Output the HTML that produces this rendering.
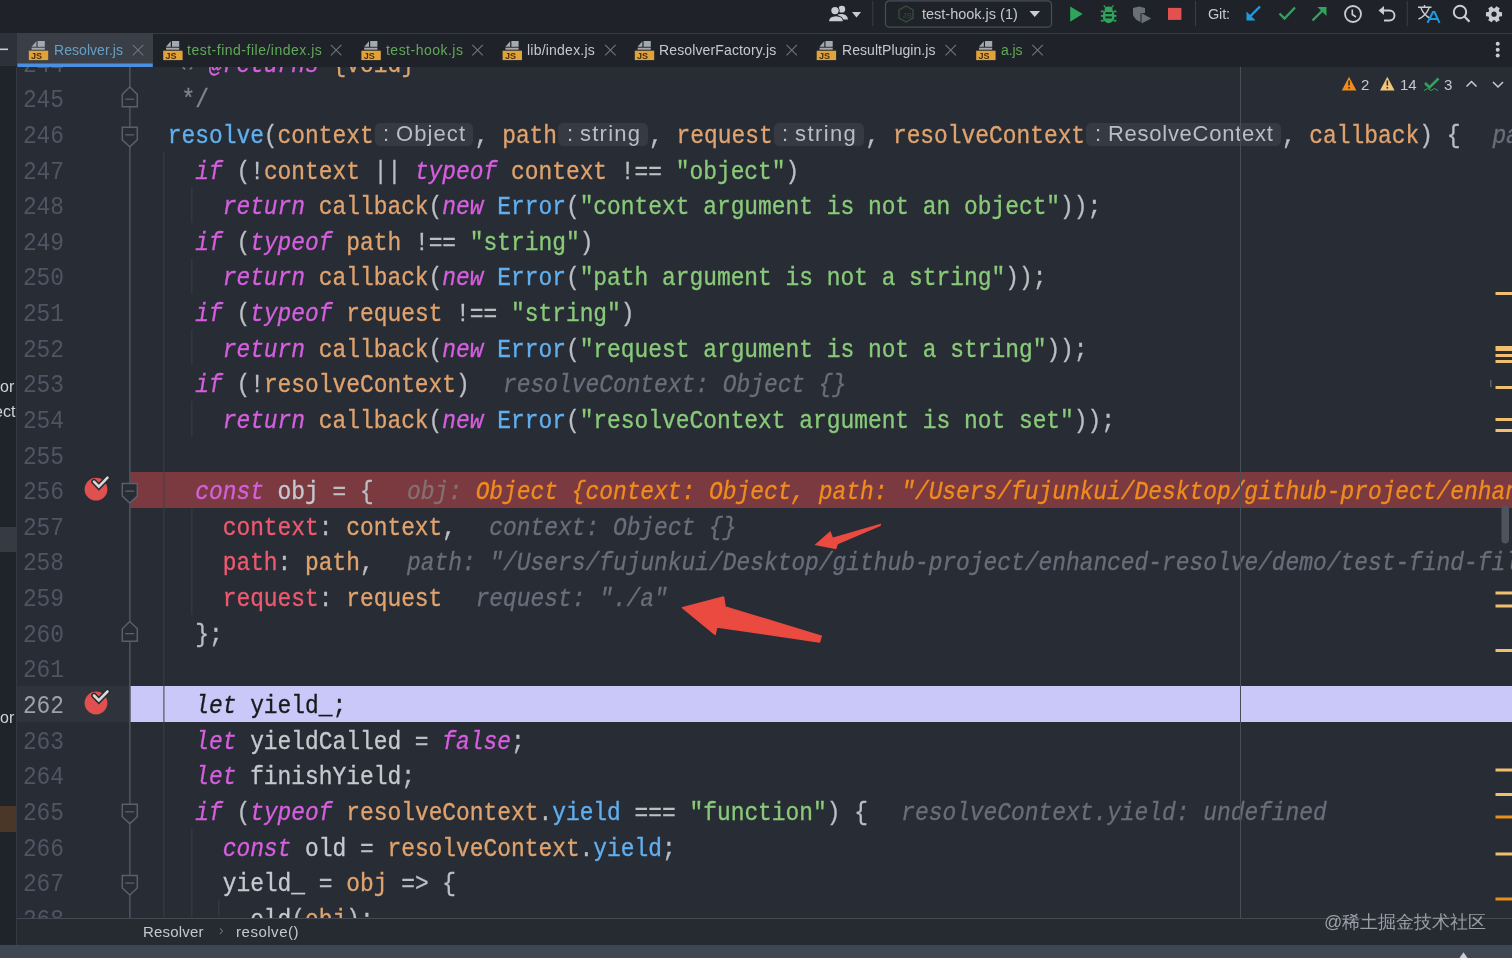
<!DOCTYPE html>
<html><head><meta charset="utf-8"><style>
*{margin:0;padding:0;box-sizing:border-box}
html,body{width:1512px;height:958px;overflow:hidden;background:#272c35;font-family:"Liberation Sans",sans-serif}
.abs{position:absolute}
#toolbar{position:absolute;left:0;top:0;width:1512px;height:33.5px;background:#1f2329;border-bottom:1.8px solid #363b43}
#tabs{position:absolute;left:0;top:33.5px;width:1512px;height:34px;background:#1f2329;border-bottom:1.6px solid #333840}
#lstrip{position:absolute;left:0;top:67px;width:17.4px;height:878px;background:#1f232a;border-right:1px solid #343a44}
#editor{position:absolute;left:17.4px;top:67px;width:1495px;height:851px;background:#272c35;overflow:hidden}
#code{position:absolute;left:-17.4px;top:-67px;width:1512px;height:958px;will-change:transform}
.ln{position:absolute;left:140.3px;height:35.63px;padding-top:3.5px;font:22.893px/35.63px "Liberation Mono",monospace;white-space:pre;color:#bbbec4;transform:scaleY(1.1);transform-origin:0 27.4px;-webkit-text-stroke:0.3px currentColor}
.num{position:absolute;left:22.9px;width:41.2px;text-align:right;height:35.63px;padding-top:3.5px;font:22.893px/35.63px "Liberation Mono",monospace;color:#4f5562;transform:scaleY(1.1);transform-origin:0 27.4px}
.num.cur{color:#9da2aa}
.kwi{color:#d55fde;font-style:italic}
.fn{color:#61afef} .par{color:#e0a36e} .str{color:#89ca78} .cls{color:#61afef}
.p{color:#bbbec4} .prop{color:#ef596f} .var{color:#c5c9d0} .cm{color:#7f848e} .type{color:#dca46c} .fld{color:#61afef}
.blk{color:#1a1a1a} .blki{color:#1a1a1a;font-style:italic}
.dv{color:#686e7a;font-style:italic}
.dvl{color:#857074;font-style:italic}
.dbg{color:#f08c1e;font-style:italic}
.hbox{position:absolute;height:23px;background:#353a43;border-radius:5px}
#brk{position:absolute;left:17.4px;top:917.5px;width:1495px;height:28px;background:#262a31;border-top:1.2px solid #434852}
#status{position:absolute;left:0;top:945.2px;width:1512px;height:13px;background:#3f4653}
.ui{position:absolute;white-space:pre;will-change:transform}
</style></head><body>
<div id="toolbar"></div>
<div id="tabs"></div>
<div class="abs" style="left:0;top:33px;width:17.4px;height:33px;background:#2d3139"></div>
<div class="abs" style="left:17.4px;top:33px;width:135.4px;height:33px;background:#3a3e46"></div>
<div id="lstrip"></div>
<div class="abs" style="left:0;top:527px;width:17.4px;height:25px;background:#363a42"></div>
<div class="abs" style="left:0;top:806.3px;width:16px;height:25.3px;background:#4a3727"></div>
<div class="ui" style="left:-0.5px;top:378px;font-size:16px;color:#d0d3d8">or</div>
<div class="ui" style="left:-6px;top:403px;font-size:16px;color:#d0d3d8">ect</div>
<div class="ui" style="left:-0.5px;top:709px;font-size:16px;color:#d0d3d8">or</div>
<div id="editor"><div id="code">
<div class="abs" style="left:130.3px;top:472.20px;width:1400px;height:35.63px;background:#7b3a3f"></div>
<div class="abs" style="left:17.4px;top:685.98px;width:112px;height:35.63px;background:#2f333b"></div>
<div class="abs" style="left:130.3px;top:685.98px;width:1400px;height:35.63px;background:#c9c8f9"></div>
<div class="num" style="top:44.64px">244</div>
<div class="num" style="top:80.27px">245</div>
<div class="num" style="top:115.90px">246</div>
<div class="num" style="top:151.53px">247</div>
<div class="num" style="top:187.16px">248</div>
<div class="num" style="top:222.79px">249</div>
<div class="num" style="top:258.42px">250</div>
<div class="num" style="top:294.05px">251</div>
<div class="num" style="top:329.68px">252</div>
<div class="num" style="top:365.31px">253</div>
<div class="num" style="top:400.94px">254</div>
<div class="num" style="top:436.57px">255</div>
<div class="num" style="top:472.20px">256</div>
<div class="num" style="top:507.83px">257</div>
<div class="num" style="top:543.46px">258</div>
<div class="num" style="top:579.09px">259</div>
<div class="num" style="top:614.72px">260</div>
<div class="num" style="top:650.35px">261</div>
<div class="num cur" style="top:685.98px">262</div>
<div class="num" style="top:721.61px">263</div>
<div class="num" style="top:757.24px">264</div>
<div class="num" style="top:792.87px">265</div>
<div class="num" style="top:828.50px">266</div>
<div class="num" style="top:864.13px">267</div>
<div class="num" style="top:899.76px">268</div>
<div class="hbox" style="left:374.88px;top:123.30px;width:98.60px"></div>
<div class="ui" style="left:383.18px;top:123.48px;font-size:22px;line-height:22px;letter-spacing:0.000px;color:#b9bdc5;">:</div>
<div class="ui" style="left:396.18px;top:123.48px;font-size:22px;line-height:22px;letter-spacing:1.084px;color:#b9bdc5;">Object</div>
<div class="hbox" style="left:558.24px;top:123.30px;width:89.60px"></div>
<div class="ui" style="left:566.54px;top:123.48px;font-size:22px;line-height:22px;letter-spacing:0.000px;color:#b9bdc5;">:</div>
<div class="ui" style="left:579.54px;top:123.48px;font-size:22px;line-height:22px;letter-spacing:1.242px;color:#b9bdc5;">string</div>
<div class="hbox" style="left:773.80px;top:123.30px;width:90.40px"></div>
<div class="ui" style="left:782.10px;top:123.48px;font-size:22px;line-height:22px;letter-spacing:0.000px;color:#b9bdc5;">:</div>
<div class="ui" style="left:795.10px;top:123.48px;font-size:22px;line-height:22px;letter-spacing:1.402px;color:#b9bdc5;">string</div>
<div class="hbox" style="left:1086.24px;top:123.30px;width:194.40px"></div>
<div class="ui" style="left:1094.54px;top:123.48px;font-size:22px;line-height:22px;letter-spacing:0.000px;color:#b9bdc5;">:</div>
<div class="ui" style="left:1107.54px;top:123.48px;font-size:22px;line-height:22px;letter-spacing:0.729px;color:#b9bdc5;">ResolveContext</div>
<div class="ln" style="top:44.64px">   <span class="cm">* </span><span class="kwi">@returns</span> <span class="type">{void}</span></div>
<div class="ln" style="top:80.27px">   <span class="cm">*/</span></div>
<div class="ln" style="top:115.90px">  <span class="fn">resolve</span><span class="p">(</span><span class="par">context</span><span style="display:inline-block;width:101.0px"></span><span class="p">,</span> <span class="par">path</span><span style="display:inline-block;width:92.0px"></span><span class="p">,</span> <span class="par">request</span><span style="display:inline-block;width:92.8px"></span><span class="p">,</span> <span class="par">resolveContext</span><span style="display:inline-block;width:196.8px"></span><span class="p">,</span> <span class="par">callback</span><span class="p">) {</span><span class="dv" style="margin-left:32px">path: "/Users/fujunkui/Desktop"</span></div>
<div class="ln" style="top:151.53px">    <span class="kwi">if</span><span class="p"> (!</span><span class="par">context</span><span class="p"> || </span><span class="kwi">typeof</span> <span class="par">context</span><span class="p"> !== </span><span class="str">"object"</span><span class="p">)</span></div>
<div class="ln" style="top:187.16px">      <span class="kwi">return</span> <span class="par">callback</span><span class="p">(</span><span class="kwi">new</span> <span class="cls">Error</span><span class="p">(</span><span class="str">"context argument is not an object"</span><span class="p">));</span></div>
<div class="ln" style="top:222.79px">    <span class="kwi">if</span><span class="p"> (</span><span class="kwi">typeof</span> <span class="par">path</span><span class="p"> !== </span><span class="str">"string"</span><span class="p">)</span></div>
<div class="ln" style="top:258.42px">      <span class="kwi">return</span> <span class="par">callback</span><span class="p">(</span><span class="kwi">new</span> <span class="cls">Error</span><span class="p">(</span><span class="str">"path argument is not a string"</span><span class="p">));</span></div>
<div class="ln" style="top:294.05px">    <span class="kwi">if</span><span class="p"> (</span><span class="kwi">typeof</span> <span class="par">request</span><span class="p"> !== </span><span class="str">"string"</span><span class="p">)</span></div>
<div class="ln" style="top:329.68px">      <span class="kwi">return</span> <span class="par">callback</span><span class="p">(</span><span class="kwi">new</span> <span class="cls">Error</span><span class="p">(</span><span class="str">"request argument is not a string"</span><span class="p">));</span></div>
<div class="ln" style="top:365.31px">    <span class="kwi">if</span><span class="p"> (!</span><span class="par">resolveContext</span><span class="p">)</span><span class="dv" style="margin-left:33.3px">resolveContext: Object {}</span></div>
<div class="ln" style="top:400.94px">      <span class="kwi">return</span> <span class="par">callback</span><span class="p">(</span><span class="kwi">new</span> <span class="cls">Error</span><span class="p">(</span><span class="str">"resolveContext argument is not set"</span><span class="p">));</span></div>
<div class="ln" style="top:436.57px"></div>
<div class="ln" style="top:472.20px">    <span class="kwi">const</span> <span class="var">obj</span><span class="p"> = {</span><span class="dvl" style="margin-left:33.3px">obj: </span><span class="dbg">Object {context: Object, path: "/Users/fujunkui/Desktop/github-project/enhanced-resolve/demo"</span></div>
<div class="ln" style="top:507.83px">      <span class="prop">context</span><span class="p">: </span><span class="par">context</span><span class="p">,</span><span class="dv" style="margin-left:33.3px">context: Object {}</span></div>
<div class="ln" style="top:543.46px">      <span class="prop">path</span><span class="p">: </span><span class="par">path</span><span class="p">,</span><span class="dv" style="margin-left:33.3px">path: "/Users/fujunkui/Desktop/github-project/enhanced-resolve/demo/test-find-file"</span></div>
<div class="ln" style="top:579.09px">      <span class="prop">request</span><span class="p">: </span><span class="par">request</span><span class="dv" style="margin-left:33.3px">request: "./a"</span></div>
<div class="ln" style="top:614.72px">    <span class="p">};</span></div>
<div class="ln" style="top:650.35px"></div>
<div class="ln" style="top:685.98px">    <span class="blki">let</span><span class="blk"> yield_;</span></div>
<div class="ln" style="top:721.61px">    <span class="kwi">let</span> <span class="var">yieldCalled</span><span class="p"> = </span><span class="kwi">false</span><span class="p">;</span></div>
<div class="ln" style="top:757.24px">    <span class="kwi">let</span> <span class="var">finishYield</span><span class="p">;</span></div>
<div class="ln" style="top:792.87px">    <span class="kwi">if</span><span class="p"> (</span><span class="kwi">typeof</span> <span class="par">resolveContext</span><span class="p">.</span><span class="fld">yield</span><span class="p"> === </span><span class="str">"function"</span><span class="p">) {</span><span class="dv" style="margin-left:33.3px">resolveContext.yield: undefined</span></div>
<div class="ln" style="top:828.50px">      <span class="kwi">const</span> <span class="var">old</span><span class="p"> = </span><span class="par">resolveContext</span><span class="p">.</span><span class="fld">yield</span><span class="p">;</span></div>
<div class="ln" style="top:864.13px">      <span class="var">yield_</span><span class="p"> = </span><span class="par">obj</span><span class="p"> =&gt; {</span></div>
<div class="ln" style="top:899.76px">        <span class="var">old</span><span class="p">(</span><span class="par">obj</span><span class="p">);</span></div>
</div></div>
<div id="brk"></div>
<div id="status"></div>
<div class="ui" style="left:53.70px;top:43.15px;font-size:14px;line-height:14px;letter-spacing:0.054px;color:#67a0c4;">Resolver.js</div>
<div class="ui" style="left:187.00px;top:43.15px;font-size:14px;line-height:14px;letter-spacing:0.505px;color:#62a85a;">test-find-file/index.js</div>
<div class="ui" style="left:385.70px;top:43.15px;font-size:14px;line-height:14px;letter-spacing:0.481px;color:#62a85a;">test-hook.js</div>
<div class="ui" style="left:527.00px;top:43.15px;font-size:14px;line-height:14px;letter-spacing:0.220px;color:#c5c9cf;">lib/index.js</div>
<div class="ui" style="left:659.00px;top:43.15px;font-size:14px;line-height:14px;letter-spacing:0.137px;color:#c5c9cf;">ResolverFactory.js</div>
<div class="ui" style="left:841.70px;top:43.15px;font-size:14px;line-height:14px;letter-spacing:0.064px;color:#c5c9cf;">ResultPlugin.js</div>
<div class="ui" style="left:1000.50px;top:43.15px;font-size:14px;line-height:14px;letter-spacing:-0.123px;color:#62a85a;">a.js</div>
<div class="ui" style="left:922.20px;top:6.73px;font-size:14.5px;line-height:14.5px;letter-spacing:-0.008px;color:#c5c9cf;">test-hook.js (1)</div>
<div class="ui" style="left:1208.00px;top:7.23px;font-size:14.5px;line-height:14.5px;letter-spacing:-0.182px;color:#c5c9cf;">Git:</div>
<div class="ui" style="left:1361.40px;top:76.80px;font-size:15px;line-height:15px;letter-spacing:0.000px;color:#c5c9cf;">2</div>
<div class="ui" style="left:1399.50px;top:76.80px;font-size:15px;line-height:15px;letter-spacing:0.000px;color:#c5c9cf;">14</div>
<div class="ui" style="left:1444.00px;top:76.80px;font-size:15px;line-height:15px;letter-spacing:0.000px;color:#c5c9cf;">3</div>
<div class="ui" style="left:143.30px;top:924.30px;font-size:15px;line-height:15px;letter-spacing:0.189px;color:#c5c9cf;">Resolver</div>
<div class="ui" style="left:235.50px;top:924.30px;font-size:15px;line-height:15px;letter-spacing:0.519px;color:#c5c9cf;">resolve()</div>
<div class="ui" style="left:219px;top:922px;font-size:14px;color:#6b7079">›</div>
<div class="ui" style="left:1324px;top:910px;font-size:18px;color:#9a9ea6">@稀土掘金技术社区</div>
<svg class="abs" style="left:0;top:0" width="1512" height="958"><circle cx="841.8" cy="9.2" r="3.4" fill="#c9ccd1"/><path d="M837.5 14.5 Q842 13.2 845.5 15 Q848 16.5 848 19.5 L841 19.5 Z" fill="#c9ccd1"/><circle cx="835" cy="10.6" r="4.6" fill="#1f2329"/><path d="M827.8 22 Q828 15.5 836 15.2 Q843.5 15.5 843.8 22 Z" fill="#1f2329"/><circle cx="835" cy="10.6" r="3.7" fill="#c9ccd1"/><path d="M829 21.2 Q829.2 16.4 836 16.2 Q842.6 16.4 842.8 21.2 Z" fill="#c9ccd1"/><path d="M852 12 L861 12 L856.5 17.5 Z" fill="#c9ccd1"/><rect x="872.3" y="1" width="1" height="25" fill="#3a3e45"/><rect x="885.5" y="0.8" width="166" height="26.4" rx="4" fill="none" stroke="#4a4f57" stroke-width="1.2"/><path d="M906 6 L913 10 L913 18 L906 22 L899 18 L899 10 Z" fill="none" stroke="#34503a" stroke-width="1.3"/><text x="902.5" y="17.5" font-family="Liberation Sans" font-size="8" fill="#34503a">JS</text><path d="M1029.5 11 L1040 11 L1034.75 17 Z" fill="#c9ccd1"/><path d="M1070.2 6.5 L1082.7 14 L1070.2 21.8 Z" fill="#2ea55a"/><g fill="#2ea55a"><ellipse cx="1108.6" cy="16" rx="6" ry="7.2"/><ellipse cx="1108.6" cy="9.5" rx="4" ry="3"/><rect x="1100.8" y="10.5" width="3" height="1.8"/><rect x="1113.4" y="10.5" width="3" height="1.8"/><rect x="1100.8" y="15" width="3" height="1.8"/><rect x="1113.4" y="15" width="3" height="1.8"/><rect x="1100.8" y="19.8" width="3" height="1.8"/><rect x="1113.4" y="19.8" width="3" height="1.8"/><path d="M1104.3 5 L1106.3 7.5 L1105.3 8.2 L1103.3 5.8 Z M1112.9 5 L1110.9 7.5 L1111.9 8.2 L1113.9 5.8 Z"/></g><rect x="1105.4" y="12.2" width="6.5" height="1.8" fill="#1f2329"/><rect x="1105.4" y="16.4" width="6.5" height="2" fill="#1f2329"/><path d="M1133 8 L1139 6.5 L1145 8 L1145 13 L1140.5 13 L1140.5 22 Q1135 20 1133 15 Z" fill="#6b6f76"/><path d="M1141.5 13 L1151.2 18.5 L1141.5 23.6 Z" fill="#6b6f76"/><rect x="1168" y="7.9" width="13.4" height="12" fill="#e25050"/><rect x="1195" y="1" width="1" height="25" fill="#3a3e45"/><path d="M1260 6.5 L1248.5 18" stroke="#1e9be0" stroke-width="2.4" fill="none"/><path d="M1246.5 11.5 L1246.5 20.5 L1255.5 20.5 Z" fill="#1e9be0"/><path d="M1279.5 13.5 L1284.5 18.5 L1295 7.5" stroke="#2ea55a" stroke-width="2.4" fill="none"/><path d="M1312.5 20.5 L1324 9" stroke="#2ea55a" stroke-width="2.4" fill="none"/><path d="M1317.5 7 L1326.5 7 L1326.5 16 Z" fill="#2ea55a"/><circle cx="1353" cy="14" r="8" fill="none" stroke="#c9ccd1" stroke-width="1.8"/><path d="M1352.3 9.5 L1352.3 14.5 L1356 17" stroke="#c9ccd1" stroke-width="1.6" fill="none"/><path d="M1383 10.5 L1389.5 10.5 A5 5 0 0 1 1389.5 20.5 L1384 20.5" stroke="#c9ccd1" stroke-width="1.9" fill="none"/><path d="M1378.5 10.5 L1384 6 L1384 15 Z" fill="#c9ccd1"/><rect x="1406.8" y="1" width="1" height="25" fill="#3a3e45"/><path d="M1418 7.3 L1431.5 7.3 M1424.5 5 L1424.5 7.3 M1421 8 Q1424 16 1431 18.5 M1429 8 Q1426 16 1418.5 19" stroke="#c9ccd1" stroke-width="1.4" fill="none"/><path d="M1427.5 22.8 L1433 12 L1434.5 12 L1439.5 22.8 M1429.5 19 L1437.5 19" stroke="#1e9be0" stroke-width="2" fill="none"/><circle cx="1460" cy="12" r="6.2" fill="none" stroke="#c9ccd1" stroke-width="2"/><path d="M1464.5 16.5 L1469.5 21.8" stroke="#c9ccd1" stroke-width="2.3"/><path d="M1502.05 12.19 L1502.05 16.21 L1499.56 16.45 L1498.73 17.89 L1499.77 20.17 L1496.29 22.18 L1494.84 20.14 L1493.16 20.14 L1491.71 22.18 L1488.23 20.17 L1489.27 17.89 L1488.44 16.45 L1485.95 16.21 L1485.95 12.19 L1488.44 11.95 L1489.27 10.51 L1488.23 8.23 L1491.71 6.22 L1493.16 8.26 L1494.84 8.26 L1496.29 6.22 L1499.77 8.23 L1498.73 10.51 L1499.56 11.95 Z" fill="#c9ccd1"/><circle cx="1494" cy="14.2" r="2.6" fill="#21252b"/><rect x="0" y="48.5" width="8" height="1.6" fill="#c9ccd1"/><rect x="17.4" y="63.5" width="135.4" height="3.5" fill="#4a8fe0"/><g transform="translate(28.8,40.5)"><path d="M2.8 6.3 L7.6 0.8 L7.6 6.3 Z" fill="#a3a9b1"/><path d="M8.8 0.5 L16 0.5 L16 6.3 L8.8 6.3 Z" fill="#a3a9b1"/><rect x="2.8" y="7.2" width="13.2" height="2" fill="#a3a9b1"/><rect x="0" y="10.2" width="19.4" height="9.4" fill="#e0a23a"/><text x="2.3" y="18.4" font-family="Liberation Sans" font-size="9" font-weight="bold" fill="#4a2e0c">JS</text></g><path d="M132.8 44.8 L143.3 55.3 M143.3 44.8 L132.8 55.3" stroke="#6e737b" stroke-width="1.15" fill="none"/><g transform="translate(163.2,40.5)"><path d="M2.8 6.3 L7.6 0.8 L7.6 6.3 Z" fill="#a3a9b1"/><path d="M8.8 0.5 L16 0.5 L16 6.3 L8.8 6.3 Z" fill="#a3a9b1"/><rect x="2.8" y="7.2" width="13.2" height="2" fill="#a3a9b1"/><rect x="0" y="10.2" width="19.4" height="9.4" fill="#e0a23a"/><text x="2.3" y="18.4" font-family="Liberation Sans" font-size="9" font-weight="bold" fill="#4a2e0c">JS</text></g><path d="M330.90000000000003 44.8 L341.40000000000003 55.3 M341.40000000000003 44.8 L330.90000000000003 55.3" stroke="#6e737b" stroke-width="1.15" fill="none"/><g transform="translate(361.4,40.5)"><path d="M2.8 6.3 L7.6 0.8 L7.6 6.3 Z" fill="#a3a9b1"/><path d="M8.8 0.5 L16 0.5 L16 6.3 L8.8 6.3 Z" fill="#a3a9b1"/><rect x="2.8" y="7.2" width="13.2" height="2" fill="#a3a9b1"/><rect x="0" y="10.2" width="19.4" height="9.4" fill="#e0a23a"/><text x="2.3" y="18.4" font-family="Liberation Sans" font-size="9" font-weight="bold" fill="#4a2e0c">JS</text></g><path d="M472.3 44.8 L482.8 55.3 M482.8 44.8 L472.3 55.3" stroke="#6e737b" stroke-width="1.15" fill="none"/><g transform="translate(502.6,40.5)"><path d="M2.8 6.3 L7.6 0.8 L7.6 6.3 Z" fill="#a3a9b1"/><path d="M8.8 0.5 L16 0.5 L16 6.3 L8.8 6.3 Z" fill="#a3a9b1"/><rect x="2.8" y="7.2" width="13.2" height="2" fill="#a3a9b1"/><rect x="0" y="10.2" width="19.4" height="9.4" fill="#e0a23a"/><text x="2.3" y="18.4" font-family="Liberation Sans" font-size="9" font-weight="bold" fill="#4a2e0c">JS</text></g><path d="M605.0999999999999 44.8 L615.5999999999999 55.3 M615.5999999999999 44.8 L605.0999999999999 55.3" stroke="#6e737b" stroke-width="1.15" fill="none"/><g transform="translate(634.8,40.5)"><path d="M2.8 6.3 L7.6 0.8 L7.6 6.3 Z" fill="#a3a9b1"/><path d="M8.8 0.5 L16 0.5 L16 6.3 L8.8 6.3 Z" fill="#a3a9b1"/><rect x="2.8" y="7.2" width="13.2" height="2" fill="#a3a9b1"/><rect x="0" y="10.2" width="19.4" height="9.4" fill="#e0a23a"/><text x="2.3" y="18.4" font-family="Liberation Sans" font-size="9" font-weight="bold" fill="#4a2e0c">JS</text></g><path d="M786.5 44.8 L797.0 55.3 M797.0 44.8 L786.5 55.3" stroke="#6e737b" stroke-width="1.15" fill="none"/><g transform="translate(816.7,40.5)"><path d="M2.8 6.3 L7.6 0.8 L7.6 6.3 Z" fill="#a3a9b1"/><path d="M8.8 0.5 L16 0.5 L16 6.3 L8.8 6.3 Z" fill="#a3a9b1"/><rect x="2.8" y="7.2" width="13.2" height="2" fill="#a3a9b1"/><rect x="0" y="10.2" width="19.4" height="9.4" fill="#e0a23a"/><text x="2.3" y="18.4" font-family="Liberation Sans" font-size="9" font-weight="bold" fill="#4a2e0c">JS</text></g><path d="M945.5 44.8 L956.0 55.3 M956.0 44.8 L945.5 55.3" stroke="#6e737b" stroke-width="1.15" fill="none"/><g transform="translate(976.2,40.5)"><path d="M2.8 6.3 L7.6 0.8 L7.6 6.3 Z" fill="#a3a9b1"/><path d="M8.8 0.5 L16 0.5 L16 6.3 L8.8 6.3 Z" fill="#a3a9b1"/><rect x="2.8" y="7.2" width="13.2" height="2" fill="#a3a9b1"/><rect x="0" y="10.2" width="19.4" height="9.4" fill="#e0a23a"/><text x="2.3" y="18.4" font-family="Liberation Sans" font-size="9" font-weight="bold" fill="#4a2e0c">JS</text></g><path d="M1032.3 44.8 L1042.8 55.3 M1042.8 44.8 L1032.3 55.3" stroke="#6e737b" stroke-width="1.15" fill="none"/><circle cx="1497.7" cy="43.7" r="2" fill="#c9ccd1"/><circle cx="1497.7" cy="49.7" r="2" fill="#c9ccd1"/><circle cx="1497.7" cy="55.5" r="2" fill="#c9ccd1"/><rect x="1240" y="67" width="1" height="851" fill="#4a4e56"/><rect x="129" y="67" width="1.7" height="851" fill="#4b515b"/><rect x="163.4" y="151.53" width="1" height="765.97" fill="#3a3f48"/><rect x="191.4" y="187.16" width="1" height="35.63" fill="#3a3f48"/><rect x="191.4" y="258.42" width="1" height="35.63" fill="#3a3f48"/><rect x="191.4" y="329.68" width="1" height="35.63" fill="#3a3f48"/><rect x="191.4" y="400.94" width="1" height="35.63" fill="#3a3f48"/><rect x="191.4" y="507.83" width="1" height="106.89" fill="#3a3f48"/><rect x="191.4" y="828.50" width="1" height="89.00" fill="#3a3f48"/><rect x="218.3" y="899.76" width="1" height="17.74" fill="#3a3f48"/><path d="M122.3 94.37 L129.8 87.07 L137.3 94.37 L137.3 106.87 L122.3 106.87 Z" fill="#272c35" stroke="#5a606b" stroke-width="1.5"/><rect x="125.3" y="98.57" width="9" height="1.3" fill="#5a606b"/><path d="M122.3 628.82 L129.8 621.52 L137.3 628.82 L137.3 641.32 L122.3 641.32 Z" fill="#272c35" stroke="#5a606b" stroke-width="1.5"/><rect x="125.3" y="633.02" width="9" height="1.3" fill="#5a606b"/><path d="M122.3 127.30 L137.3 127.30 L137.3 139.80 L129.8 146.70 L122.3 139.80 Z" fill="#272c35" stroke="#5a606b" stroke-width="1.5"/><rect x="125.3" y="134.20" width="9" height="1.3" fill="#5a606b"/><path d="M122.3 483.60 L137.3 483.60 L137.3 496.10 L129.8 503.00 L122.3 496.10 Z" fill="#272c35" stroke="#5a606b" stroke-width="1.5"/><rect x="125.3" y="490.50" width="9" height="1.3" fill="#5a606b"/><path d="M122.3 804.27 L137.3 804.27 L137.3 816.77 L129.8 823.67 L122.3 816.77 Z" fill="#272c35" stroke="#5a606b" stroke-width="1.5"/><rect x="125.3" y="811.17" width="9" height="1.3" fill="#5a606b"/><path d="M122.3 875.53 L137.3 875.53 L137.3 888.03 L129.8 894.93 L122.3 888.03 Z" fill="#272c35" stroke="#5a606b" stroke-width="1.5"/><rect x="125.3" y="882.43" width="9" height="1.3" fill="#5a606b"/><circle cx="96" cy="489.20" r="11.4" fill="#e0504f"/><path d="M94 481.70 L98.8 486.70 L107.5 477.70" stroke="#262a31" stroke-width="5.5" fill="none" stroke-linecap="round"/><path d="M94 481.70 L98.8 486.70 L107.5 477.70" stroke="#d6d9d6" stroke-width="2.6" fill="none" stroke-linecap="round"/><circle cx="96" cy="702.98" r="11.4" fill="#e0504f"/><path d="M94 695.48 L98.8 700.48 L107.5 691.48" stroke="#262a31" stroke-width="5.5" fill="none" stroke-linecap="round"/><path d="M94 695.48 L98.8 700.48 L107.5 691.48" stroke="#d6d9d6" stroke-width="2.6" fill="none" stroke-linecap="round"/><rect x="1495.5" y="292" width="17" height="3" fill="#f0c070"/><rect x="1495.5" y="346" width="17" height="5" fill="#f0c070"/><rect x="1495.5" y="354" width="17" height="3" fill="#f0c070"/><rect x="1495.5" y="360" width="17" height="3" fill="#f0c070"/><rect x="1495.5" y="386" width="17" height="3" fill="#f0c070"/><rect x="1495.5" y="418" width="17" height="3" fill="#f0c070"/><rect x="1495.5" y="429" width="17" height="3" fill="#f0c070"/><rect x="1495.5" y="591.5" width="17" height="3" fill="#f0c070"/><rect x="1495.5" y="604.5" width="17" height="3" fill="#f0c070"/><rect x="1495.5" y="649" width="17" height="3" fill="#f0c070"/><rect x="1495.5" y="768.5" width="17" height="3" fill="#f0c070"/><rect x="1495.5" y="793" width="17" height="3" fill="#f0c070"/><rect x="1495.5" y="815.5" width="17" height="3" fill="#e8901a"/><rect x="1495.5" y="852.5" width="17" height="3" fill="#f0c070"/><rect x="1495.5" y="897.5" width="17" height="3" fill="#e8901a"/><rect x="1501.5" y="505" width="7.5" height="38.5" rx="3.7" fill="#4e535c"/><rect x="1490" y="380" width="1.5" height="7" fill="#5d626b"/><path d="M814.5 545.1 L830.4 530.9 L832.9 537.6 L881.3 523.4 L880.5 525.9 L837.9 544.3 L836.2 549.3 Z" fill="#ea4a40"/><path d="M682.5 607.7 L723.5 596.9 L725.1 606.9 L821.2 636.1 L819.5 642 L716.8 626.9 L715.1 634.4 Z" fill="#ea4a40" stroke="#ea4a40" stroke-width="1.5" stroke-linejoin="round"/><path d="M1349 76.8 L1356.4 90.4 L1341.8 90.4 Z" fill="#f08a1c"/><rect x="1348.3" y="80.5" width="1.5" height="5" fill="#262a31"/><rect x="1348.3" y="87" width="1.5" height="1.6" fill="#262a31"/><path d="M1387.3 76.8 L1394.6 90.4 L1380 90.4 Z" fill="#f2c57c"/><rect x="1386.6" y="80.5" width="1.5" height="5" fill="#262a31"/><rect x="1386.6" y="87" width="1.5" height="1.6" fill="#262a31"/><path d="M1425 83 L1429.5 87.5 L1438.5 78.5" stroke="#2ea55a" stroke-width="2.6" fill="none"/><path d="M1424 90.5 L1427.5 88.5 L1431 90.5 L1434.5 88.5 L1438 90.5" stroke="#2ea55a" stroke-width="1" fill="none"/><path d="M1466.5 86.5 L1471.5 81.5 L1476.5 86.5" stroke="#c9ccd1" stroke-width="1.5" fill="none"/><path d="M1493 82 L1498 87 L1503 82" stroke="#c9ccd1" stroke-width="1.5" fill="none"/><path d="M1459.5 958 L1463.5 952.3 L1467.5 958 Z" fill="#c9ccd1"/><path d="M182.8 67.5 L185.3 69.3 M192.2 67.5 L189.7 69.3" stroke="#737883" stroke-width="1.6"/></svg>
</body></html>
